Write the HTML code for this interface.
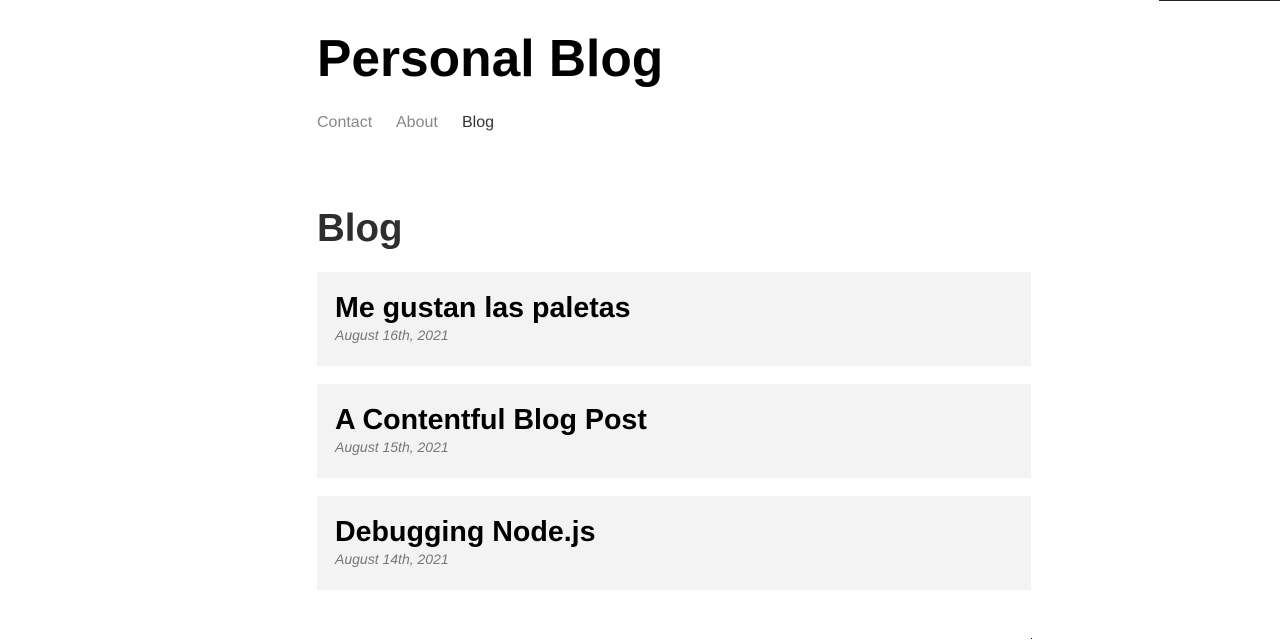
<!DOCTYPE html>
<html><head><meta charset="utf-8"><style>
html,body{margin:0;padding:0;background:#fff;width:1280px;height:640px;overflow:hidden;position:relative;font-family:"Liberation Sans",Arial,sans-serif}
.a{position:absolute;line-height:1;white-space:nowrap;margin:0}
.t{left:317px;top:33px;font-size:51.5px;font-weight:bold;color:#000}
.n{top:115px;font-size:16px;color:#888}
.h{left:317px;top:210px;font-size:38.5px;font-weight:bold;color:#2e2e2e}
.c{position:absolute;left:317px;width:714px;height:94px;background:#f3f3f3}
.c .ct{left:18px;top:22px;font-size:28.6px;font-weight:bold;color:#000}
.c .d{left:18px;top:56px;font-size:14px;font-style:italic;color:#777}
.line{position:absolute;left:1159px;top:0;width:121px;height:1px;background:#222}
</style></head><body>
<div class="line"></div>
<h1 class="a t">Personal Blog</h1>
<span class="a n" style="left:317px">Contact</span>
<span class="a n" style="left:396px">About</span>
<span class="a n" style="left:462px;color:#333">Blog</span>
<h2 class="a h">Blog</h2>
<div class="c" style="top:272px"><span class="a ct">Me gustan las paletas</span><span class="a d">August 16th, 2021</span></div>
<div class="c" style="top:384px"><span class="a ct">A Contentful Blog Post</span><span class="a d">August 15th, 2021</span></div>
<div class="c" style="top:496px"><span class="a ct">Debugging Node.js</span><span class="a d">August 14th, 2021</span></div>
<div style="position:absolute;left:1031px;top:638px;width:1px;height:1px;background:#000"></div>
</body></html>
